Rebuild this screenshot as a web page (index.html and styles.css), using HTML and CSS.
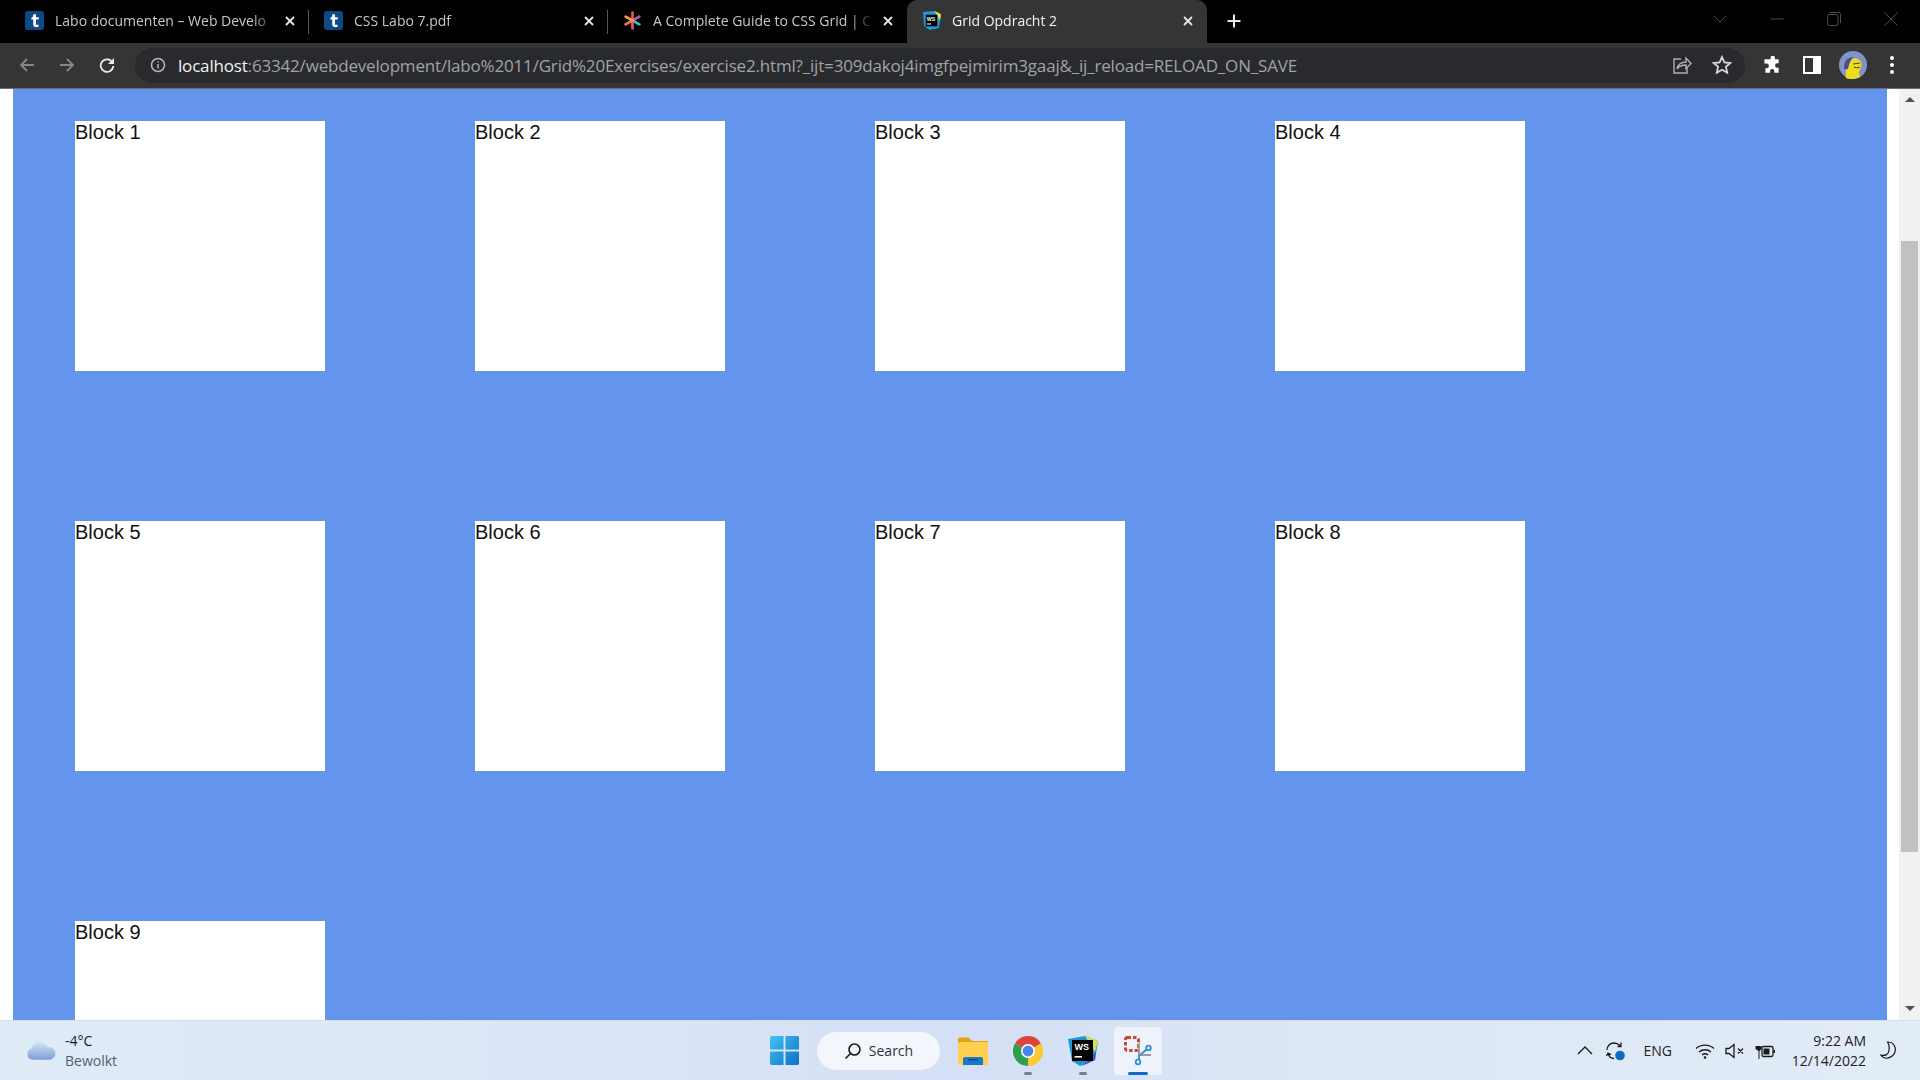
FILE: index.html
```html
<!DOCTYPE html>
<html lang="en">
<head>
    <meta charset="UTF-8">
    <title>Grid Opdracht 2</title>
    <link rel="stylesheet" href="styles.css">
</head>
<body>
    <div class="screen">
        <!-- tab strip -->
        <div class="tabstrip">
            <div class="tab">
                <svg class="favicon" viewBox="0 0 18 18"><rect width="18" height="18" rx="2.5" fill="#0d4a86"/><path d="M8 3h2.4v3H13v2h-2.6v4.2c0 1 .9 1 2.4.7v2c-2.800.8-5 .3-5-2.700V8H6V6.500C7.300 6 7.800 5 8 3z" fill="#fff"/></svg>
                <span class="tab-title">Labo documenten – Web Develo</span>
                <svg class="tab-close" viewBox="0 0 12 12"><path d="M2 2l8 8M10 2l-8 8"/></svg>
            </div>
            <div class="tab">
                <svg class="favicon" viewBox="0 0 18 18"><rect width="18" height="18" rx="2.5" fill="#0d4a86"/><path d="M8 3h2.4v3H13v2h-2.6v4.2c0 1 .9 1 2.4.7v2c-2.800.8-5 .3-5-2.700V8H6V6.500C7.300 6 7.800 5 8 3z" fill="#fff"/></svg>
                <span class="tab-title">CSS Labo 7.pdf</span>
                <svg class="tab-close" viewBox="0 0 12 12"><path d="M2 2l8 8M10 2l-8 8"/></svg>
            </div>
            <div class="tab tab-last">
                <svg class="favicon" viewBox="0 0 18 18">
                    <g stroke-width="2.600" stroke-linecap="round">
                        <path d="M9 9V1.500" stroke="#e8504c"/>
                        <path d="M9 9l6.500-3.700" stroke="#b0609c"/>
                        <path d="M9 9l6.500 3.700" stroke="#3fb8c4"/>
                        <path d="M9 9v7.500" stroke="#d8567a"/>
                        <path d="M9 9l-6.500 3.700" stroke="#f0784c"/>
                        <path d="M9 9L2.500 5.300" stroke="#f59a3c"/>
                    </g>
                </svg>
                <span class="tab-title">A Complete Guide to CSS Grid | C</span>
                <svg class="tab-close" viewBox="0 0 12 12"><path d="M2 2l8 8M10 2l-8 8"/></svg>
            </div>
            <div class="tab tab-active">
                <svg class="favicon" viewBox="0 0 18 18">
                    <path d="M1 1l11-1 6 3-2 13-9 2-5-4z" fill="#1e9fd8"/>
                    <path d="M12 0l6 3-1 6z" fill="#e6e04a"/>
                    <rect x="3.500" y="3.500" width="11" height="11" fill="#000"/>
                    <text class="ws-text" x="4.500" y="9">WS</text>
                    <rect x="4.500" y="11.800" width="4" height="1" fill="#fff"/>
                </svg>
                <span class="tab-title">Grid Opdracht 2</span>
                <svg class="tab-close" viewBox="0 0 12 12"><path d="M2 2l8 8M10 2l-8 8"/></svg>
            </div>
            <svg class="new-tab" viewBox="0 0 16 16"><path d="M8 1.500v13M1.500 8h13"/></svg>
            <div class="window-controls">
                <svg viewBox="0 0 14 14" class="win-chevron"><path d="M1 4l6 6 6-6"/></svg>
                <svg viewBox="0 0 14 14" class="win-min"><path d="M.5 7h13"/></svg>
                <svg viewBox="0 0 14 14" class="win-restore"><rect x=".5" y="2.500" width="10.500" height="11" rx="2"/><path d="M3 .5h8.500a2 2 0 0 1 2 2V11"/></svg>
                <svg viewBox="0 0 14 14" class="win-close"><path d="M.5.5l13 13M13.500.5l-13 13"/></svg>
            </div>
        </div>

        <!-- toolbar -->
        <div class="toolbar">
            <div class="nav-buttons">
                <svg class="nav-icon nav-off" viewBox="0 0 16 16"><path d="M15 8H2M8 2L2 8l6 6"/></svg>
                <svg class="nav-icon nav-off" viewBox="0 0 16 16"><path d="M1 8h13M8 2l6 6-6 6"/></svg>
                <svg class="nav-icon nav-on" viewBox="0 0 16 16"><path d="M13.500 5.500A6.300 6.300 0 1 0 14.300 9"/><path class="solid" d="M15 1v6H9z"/></svg>
            </div>
            <div class="omnibox">
                <svg class="info-icon" viewBox="0 0 16 16"><circle cx="8" cy="8" r="6.500"/><path d="M8 7v4.500M8 4.200v1.400"/></svg>
                <span class="url"><span class="url-host">localhost</span>:63342/webdevelopment/labo%2011/Grid%20Exercises/exercise2.html?_ijt=309dakoj4imgfpejmirim3gaaj&amp;_ij_reload=RELOAD_ON_SAVE</span>
                <svg class="omni-icon share" viewBox="0 0 20 20"><path d="M9 4H2v14h13v-5M5 14c1-5 5-7 9-7V3l5 5.500-5 5V10c-4 0-7 1-9 4z"/></svg>
                <svg class="omni-icon star" viewBox="0 0 20 20"><path d="M10 2l2.400 5.400 5.900.6-4.400 3.900 1.300 5.800L10 14.700l-5.200 3 1.300-5.800L1.700 8l5.900-.6z"/></svg>
            </div>
            <div class="toolbar-right">
                <svg class="tool-icon" viewBox="0 0 20 20"><path d="M8 1.500a2.300 2.300 0 0 1 4.500 0v2h4v4.200h-1.500a2.300 2.300 0 0 0 0 4.600h1.500v5.200H12v-1.500a2.300 2.300 0 0 0-4.600 0v1.500H2.500V13h1.200a2.500 2.500 0 0 0 0-5H1.500V3.500H8z" fill="#fff"/></svg>
                <div class="sidebar-icon"></div>
                <svg class="avatar" viewBox="0 0 28 28">
                    <circle cx="14" cy="14" r="14" fill="#8094c6"/>
                    <path d="M7 27c-1-6 1-10 2-15 1-4 6-6 10-4 4 2 4 6 3 9-1 2-2 3-2 5l1 4c-4 2-10 3-14 1z" fill="#f0dc1e"/>
                    <path d="M5 18c0-5 1-9 5-11l5-1c-3 2-5 6-6 12z" fill="#4f4a8c"/>
                    <path d="M14 13l7-1M15 16c2 1 4 1 6 0" stroke="#4a4420" stroke-width="1.200" fill="none"/>
                </svg>
                <div class="menu-dots"><i></i><i></i><i></i></div>
            </div>
        </div>

        <!-- page + scrollbar -->
        <div class="viewport">
            <div class="page">
                <div class="grid-container">
                    <div class="block">Block 1</div>
                    <div class="block">Block 2</div>
                    <div class="block">Block 3</div>
                    <div class="block">Block 4</div>
                    <div class="block">Block 5</div>
                    <div class="block">Block 6</div>
                    <div class="block">Block 7</div>
                    <div class="block">Block 8</div>
                    <div class="block">Block 9</div>
                </div>
            </div>
            <div class="scrollbar">
                <div class="arrow arrow-up"></div>
                <div class="track"><div class="thumb"></div></div>
                <div class="arrow arrow-down"></div>
            </div>
        </div>

        <!-- windows taskbar -->
        <div class="taskbar">
            <div class="weather">
                <svg class="cloud" viewBox="0 0 32 20">
                    <defs><linearGradient id="cloudfill" x1="0" y1="0" x2="0" y2="1"><stop offset="0" stop-color="#d3e2f6"/><stop offset="1" stop-color="#7f9fd6"/></linearGradient></defs>
                    <path d="M7 19a6 6 0 0 1-1-11.800C7 3 11 .5 15 .8c3.500.2 6 2.200 7.200 5.200a6.600 6.600 0 0 1 3 13z" fill="url(#cloudfill)"/>
                </svg>
                <div class="weather-text">
                    <span class="temp">-4°C</span>
                    <span class="cond">Bewolkt</span>
                </div>
            </div>
            <div class="task-center">
                <svg class="start" viewBox="0 0 30 30">
                    <defs><linearGradient id="startfill" x1="0" y1="0" x2="1" y2="1"><stop offset="0" stop-color="#43c4f2"/><stop offset="1" stop-color="#0a6fc9"/></linearGradient></defs>
                    <path d="M0 1.500A1.500 1.500 0 0 1 1.500 0H14v14H0zM16 0h12.500A1.500 1.500 0 0 1 30 1.500V14H16zM0 16h14v14H1.500A1.500 1.500 0 0 1 0 28.500zM16 16h14v12.500a1.500 1.500 0 0 1-1.500 1.500H16z" fill="url(#startfill)"/>
                </svg>
                <div class="search-pill">
                    <svg viewBox="0 0 18 18"><circle cx="10.500" cy="7.500" r="5.500"/><path d="M6.500 11.500L1.500 16.500"/></svg>
                    <span>Search</span>
                </div>
                <div class="app">
                    <svg class="app-icon" viewBox="0 0 30 28">
                        <path d="M0 2a1.500 1.500 0 0 1 1.500-1.500h9L14 4h16v4H0z" fill="#e5a50a"/>
                        <rect y="5" width="30" height="23" rx="1.500" fill="#fdd04f"/>
                        <path d="M5 28v-6a2 2 0 0 1 2-2h16a2 2 0 0 1 2 2v6z" fill="#1a79c7"/>
                        <rect x="10" y="22" width="10" height="1.500" fill="#0f4f8c"/>
                    </svg>
                </div>
                <div class="app app-open">
                    <svg class="app-icon" viewBox="0 0 30 30">
                        <path d="M15 15L2 7.500A15 15 0 0 1 28 7.500z" fill="#db4437"/>
                        <path d="M15 15L2 7.500A15 15 0 0 0 15 30z" fill="#2e9e4f"/>
                        <path d="M15 15L28 7.500A15 15 0 0 1 15 30z" fill="#fcc934"/>
                        <circle cx="15" cy="15" r="7" fill="#fff"/>
                        <circle cx="15" cy="15" r="5.400" fill="#4a86e8"/>
                    </svg>
                </div>
                <div class="app app-open">
                    <svg class="app-icon" viewBox="0 0 30 30">
                        <path d="M0 3l17-3 13 5-3 19-15 6-8-5z" fill="#1c9ad6"/>
                        <path d="M17 0l13 5-3 11z" fill="#d8e04a"/>
                        <path d="M22 22l6-6-1 8-13 6z" fill="#3a57d8"/>
                        <rect x="4" y="4" width="21" height="21" fill="#000"/>
                        <text class="ws-big" x="6.500" y="14">WS</text>
                        <rect x="6.500" y="20" width="7.500" height="1.600" fill="#fff"/>
                    </svg>
                </div>
                <div class="app app-active">
                    <svg class="snip" viewBox="0 0 28 30">
                        <rect x="1.500" y="1.500" width="13" height="13" rx="2" fill="none" stroke="#c9482f" stroke-width="3" stroke-dasharray="3.500 2"/>
                        <path d="M14 7h2v11h11v2H14z" fill="#9d9d9d"/>
                        <circle cx="24.500" cy="12" r="2.300" fill="none" stroke="#2f8fd8" stroke-width="1.800"/>
                        <circle cx="14" cy="26" r="2.300" fill="none" stroke="#2f8fd8" stroke-width="1.800"/>
                        <path d="M22.500 13.500L16 19M15 19v5" stroke="#2f8fd8" stroke-width="1.800"/>
                    </svg>
                </div>
            </div>
            <div class="tray">
                <svg class="tray-chevron" viewBox="0 0 16 9"><path d="M1 8l7-7 7 7"/></svg>
                <svg class="tray-sync" viewBox="0 0 20 20">
                    <path d="M2 9c0-4 3-7 7-7 2 0 4 .8 6 2.500M12.500 5.500h3.500V1.500M3 12.500c1 3 3.500 5 6 5M1.500 15l1.500-3 3 1.500"/>
                    <circle class="solid-blue" cx="15" cy="14.500" r="4.800"/>
                </svg>
                <span class="tray-lang">ENG</span>
                <svg class="tray-wifi" viewBox="0 0 20 16"><path d="M1 5.500c5-4.600 13-4.600 18 0M4 9c3.400-3 8.600-3 12 0M7 12c1.700-1.400 4.300-1.400 6 0"/><circle cx="10" cy="14.500" r="1.300"/></svg>
                <svg class="tray-mute" viewBox="0 0 20 16"><path d="M1 5.500h3L9 1.500v13l-5-4H1zM13 5.500l5 5M18 5.500l-5 5"/></svg>
                <svg class="tray-battery" viewBox="0 0 20 16">
                    <path d="M2 0v3M5 0v3M.5 3h6v3l-2 2v8h-1V8l-3-2z" fill="#1a1a1a"/>
                    <rect x="7" y="3.500" width="11" height="10" rx="1.500" fill="#e0eaf6" stroke="#1a1a1a" stroke-width="1.300"/>
                    <rect x="8.500" y="5.500" width="6" height="6" fill="#1a1a1a"/>
                    <rect x="18.500" y="7" width="1.500" height="3" fill="#1a1a1a"/>
                </svg>
                <div class="clock">
                    <span>9:22 AM</span>
                    <span>12/14/2022</span>
                </div>
                <svg class="tray-moon" viewBox="0 0 18 20"><path d="M8 1c4 0 7 2 8 6 .7 4-1 8-5 10-4 2-8 1-10-2 5 1 8-1 8.500-5C10 7 9.500 3.500 8 1z"/></svg>
            </div>
        </div>
    </div>
</body>
</html>
```

FILE: styles.css
```css
* {
    box-sizing: border-box;
}

html, body {
    margin: 0;
    height: 100%;
    overflow: hidden;
}

body {
    font-family: "Open Sans", "Noto Sans", sans-serif;
}

svg {
    display: block;
    flex: none;
}

.screen {
    display: flex;
    flex-direction: column;
    height: 1080px;
}

/* Tab strip */
.tabstrip {
    display: flex;
    align-items: stretch;
    height: 43px;
    padding: 0 0 0 10px;
    background: #000;
}

.tab {
    display: flex;
    align-items: center;
    width: 299px;
    padding: 0 13px 2px 15px;
    position: relative;
    color: #c6c8cb;
    font-size: 14px;
}

.tab::after {
    content: "";
    position: absolute;
    right: 0;
    top: 10px;
    bottom: 9px;
    width: 1px;
    background: #55585c;
}

.tab-last::after {
    display: none;
}

.tab-active {
    width: 300px;
    background: #353535;
    border-radius: 10px 10px 0 0;
    color: #f1f3f4;
}

.tab-active::after {
    display: none;
}

.favicon {
    width: 19px;
    height: 19px;
}

.tab-title {
    flex: 1;
    margin-left: 11px;
    white-space: nowrap;
    overflow: hidden;
    -webkit-mask-image: linear-gradient(to right, #000 calc(100% - 24px), transparent);
    mask-image: linear-gradient(to right, #000 calc(100% - 24px), transparent);
}

.tab-close {
    width: 12px;
    height: 12px;
    margin-left: 8px;
    fill: none;
    stroke: #e4e6e8;
    stroke-width: 1.8;
}

.ws-text {
    font-family: "Liberation Sans", sans-serif;
    font-size: 5px;
    font-weight: bold;
    fill: #fff;
}

.new-tab {
    width: 16px;
    height: 16px;
    margin: 13px 0 0 19px;
    fill: none;
    stroke: #e8eaed;
    stroke-width: 2;
}

.window-controls {
    margin-left: auto;
    display: flex;
    align-items: center;
    gap: 43px;
    padding: 0 22px 6px 0;
}

.window-controls svg {
    width: 14px;
    height: 14px;
    fill: none;
    stroke: #4c4c4c;
    stroke-width: 1;
}

/* Toolbar */
.toolbar {
    display: flex;
    align-items: center;
    height: 46px;
    background: #353535;
    border-bottom: 1px solid #6a6d72;
    padding-bottom: 1px;
}

.nav-buttons {
    display: flex;
    align-items: center;
    gap: 24px;
    width: 135px;
    padding-left: 19px;
}

.nav-icon {
    width: 16px;
    height: 16px;
    fill: none;
    stroke-width: 1.8;
}

.nav-off {
    stroke: #85878a;
}

.nav-on {
    stroke: #e8eaed;
}

.nav-on .solid {
    fill: #e8eaed;
    stroke: none;
}

.omnibox {
    display: flex;
    align-items: center;
    width: 1610px;
    height: 35px;
    border-radius: 18px;
    background: #292a2d;
    padding: 0 13px 0 15px;
    font-size: 17px;
    white-space: nowrap;
    color: #a0a3a7;
}

.info-icon {
    width: 16px;
    height: 16px;
    fill: none;
    stroke: #b4b6b9;
    stroke-width: 1.5;
}

.url {
    margin-left: 12px;
    flex: 1;
    letter-spacing: -0.18px;
}

.url-host {
    color: #f1f3f4;
}

.omni-icon {
    width: 20px;
    height: 20px;
    fill: none;
    stroke: #aeb0b3;
    stroke-width: 1.4;
}

.omni-icon.star {
    margin-left: 20px;
    stroke: #d5d7d9;
    stroke-width: 1.8;
}

.toolbar-right {
    display: flex;
    align-items: center;
    flex: 1;
    padding-left: 18px;
}

.tool-icon {
    width: 19px;
    height: 19px;
}

.sidebar-icon {
    width: 18px;
    height: 18px;
    margin-left: 21px;
    border: 2px solid #fff;
    border-right-width: 8px;
}

.avatar {
    width: 28px;
    height: 28px;
    margin-left: 18px;
}

.menu-dots {
    display: flex;
    flex-direction: column;
    gap: 3px;
    margin-left: 23px;
}

.menu-dots i {
    width: 4px;
    height: 4px;
    border-radius: 50%;
    background: #fff;
}

/* Page area */
.viewport {
    flex: 1;
    display: flex;
    min-height: 0;
    background: #fff;
}

.page {
    flex: 1;
    min-width: 0;
    padding: 0 12px 0 13px;
    overflow: hidden;
}

.grid-container {
    display: grid;
    grid-template-columns: repeat(4, 250px);
    grid-auto-rows: 250px;
    gap: 150px;
    height: 100%;
    padding: 32px 62px;
    background: cornflowerblue;
}

.block {
    background: #fff;
    color: #111;
    font-family: "Liberation Sans", Arial, sans-serif;
    font-size: 20px;
    line-height: 23px;
}

.scrollbar {
    width: 21px;
    display: flex;
    flex-direction: column;
    background: #f1f1f1;
}

.arrow {
    height: 22px;
    flex: none;
    position: relative;
}

.arrow::before {
    content: "";
    position: absolute;
    left: 6px;
    border-left: 5px solid transparent;
    border-right: 5px solid transparent;
}

.arrow-up::before {
    top: 8px;
    border-bottom: 5px solid #505050;
}

.arrow-down::before {
    top: 8px;
    border-top: 5px solid #505050;
}

.track {
    flex: 1;
    padding: 130px 2px 0;
}

.thumb {
    height: 611px;
    background: #c1c1c1;
}

/* Taskbar */
.taskbar {
    height: 60px;
    display: flex;
    align-items: center;
    background: linear-gradient(to right, #e0ebf8 0%, #d9e4f7 35%, #d5dff5 50%, #dde7f6 70%, #e1ecf7 100%);
    border-top: 1px solid #d4dde9;
    position: relative;
}

.weather {
    width: 770px;
    display: flex;
    align-items: center;
    padding-left: 26px;
}

.cloud {
    width: 31px;
    height: 20px;
}

.weather-text {
    display: flex;
    flex-direction: column;
    margin-left: 8px;
    font-size: 14px;
    line-height: 20px;
}

.temp {
    color: #1a1a1a;
}

.cond {
    color: #55606e;
}

.task-center {
    display: flex;
    align-items: center;
    width: 392px;
}

.start {
    width: 29px;
    height: 29px;
}

.search-pill {
    display: flex;
    align-items: center;
    justify-content: center;
    gap: 7px;
    width: 123px;
    height: 38px;
    margin-left: 18px;
    border-radius: 19px;
    background: #f3f6fd;
    color: #333;
    font-size: 14px;
}

.search-pill svg {
    width: 18px;
    height: 18px;
    fill: none;
    stroke: #1a1a1a;
    stroke-width: 1.600;
}

.app {
    width: 30px;
    height: 48px;
    margin-left: 18px;
    display: flex;
    align-items: center;
    justify-content: center;
    position: relative;
}

.app + .app {
    margin-left: 25px;
}

.app-icon {
    width: 30px;
    height: 30px;
}

.app-open::after {
    content: "";
    position: absolute;
    left: 11px;
    bottom: 0;
    width: 8px;
    height: 3px;
    border-radius: 2px;
    background: #7b8087;
}

.app + .app-active {
    width: 48px;
    margin-left: 16px;
    background: #edf2fb;
    border-radius: 4px;
}

.app-active::after {
    content: "";
    position: absolute;
    left: 14px;
    bottom: 0;
    width: 20px;
    height: 3px;
    border-radius: 2px;
    background: #0f6cc6;
}

.ws-big {
    font-family: "Liberation Sans", sans-serif;
    font-size: 9px;
    font-weight: bold;
    fill: #fff;
}

.snip {
    width: 28px;
    height: 30px;
}

.tray {
    flex: 1;
    display: flex;
    align-items: center;
    justify-content: flex-end;
    padding-right: 23px;
}

.tray svg {
    fill: none;
    stroke: #1a1a1a;
    stroke-width: 1.300;
}

.tray-chevron {
    width: 16px;
    height: 9px;
}

.tray-sync {
    width: 20px;
    height: 20px;
    margin-left: 12px;
}

.tray .solid-blue {
    fill: #0f6cc6;
    stroke: none;
}

.tray-lang {
    margin-left: 19px;
    font-size: 14px;
    color: #222;
}

.tray-wifi {
    width: 20px;
    height: 16px;
    margin-left: 23px;
}

.tray-wifi circle {
    fill: #1a1a1a;
    stroke: none;
}

.tray-mute {
    width: 20px;
    height: 16px;
    margin-left: 10px;
}

.tray .tray-battery {
    width: 20px;
    height: 16px;
    margin-left: 10px;
    stroke: none;
}

.clock {
    display: flex;
    flex-direction: column;
    align-items: flex-end;
    width: 91px;
    font-size: 14px;
    line-height: 20px;
    color: #222;
}

.tray-moon {
    width: 17px;
    height: 19px;
    margin-left: 14px;
}
```
